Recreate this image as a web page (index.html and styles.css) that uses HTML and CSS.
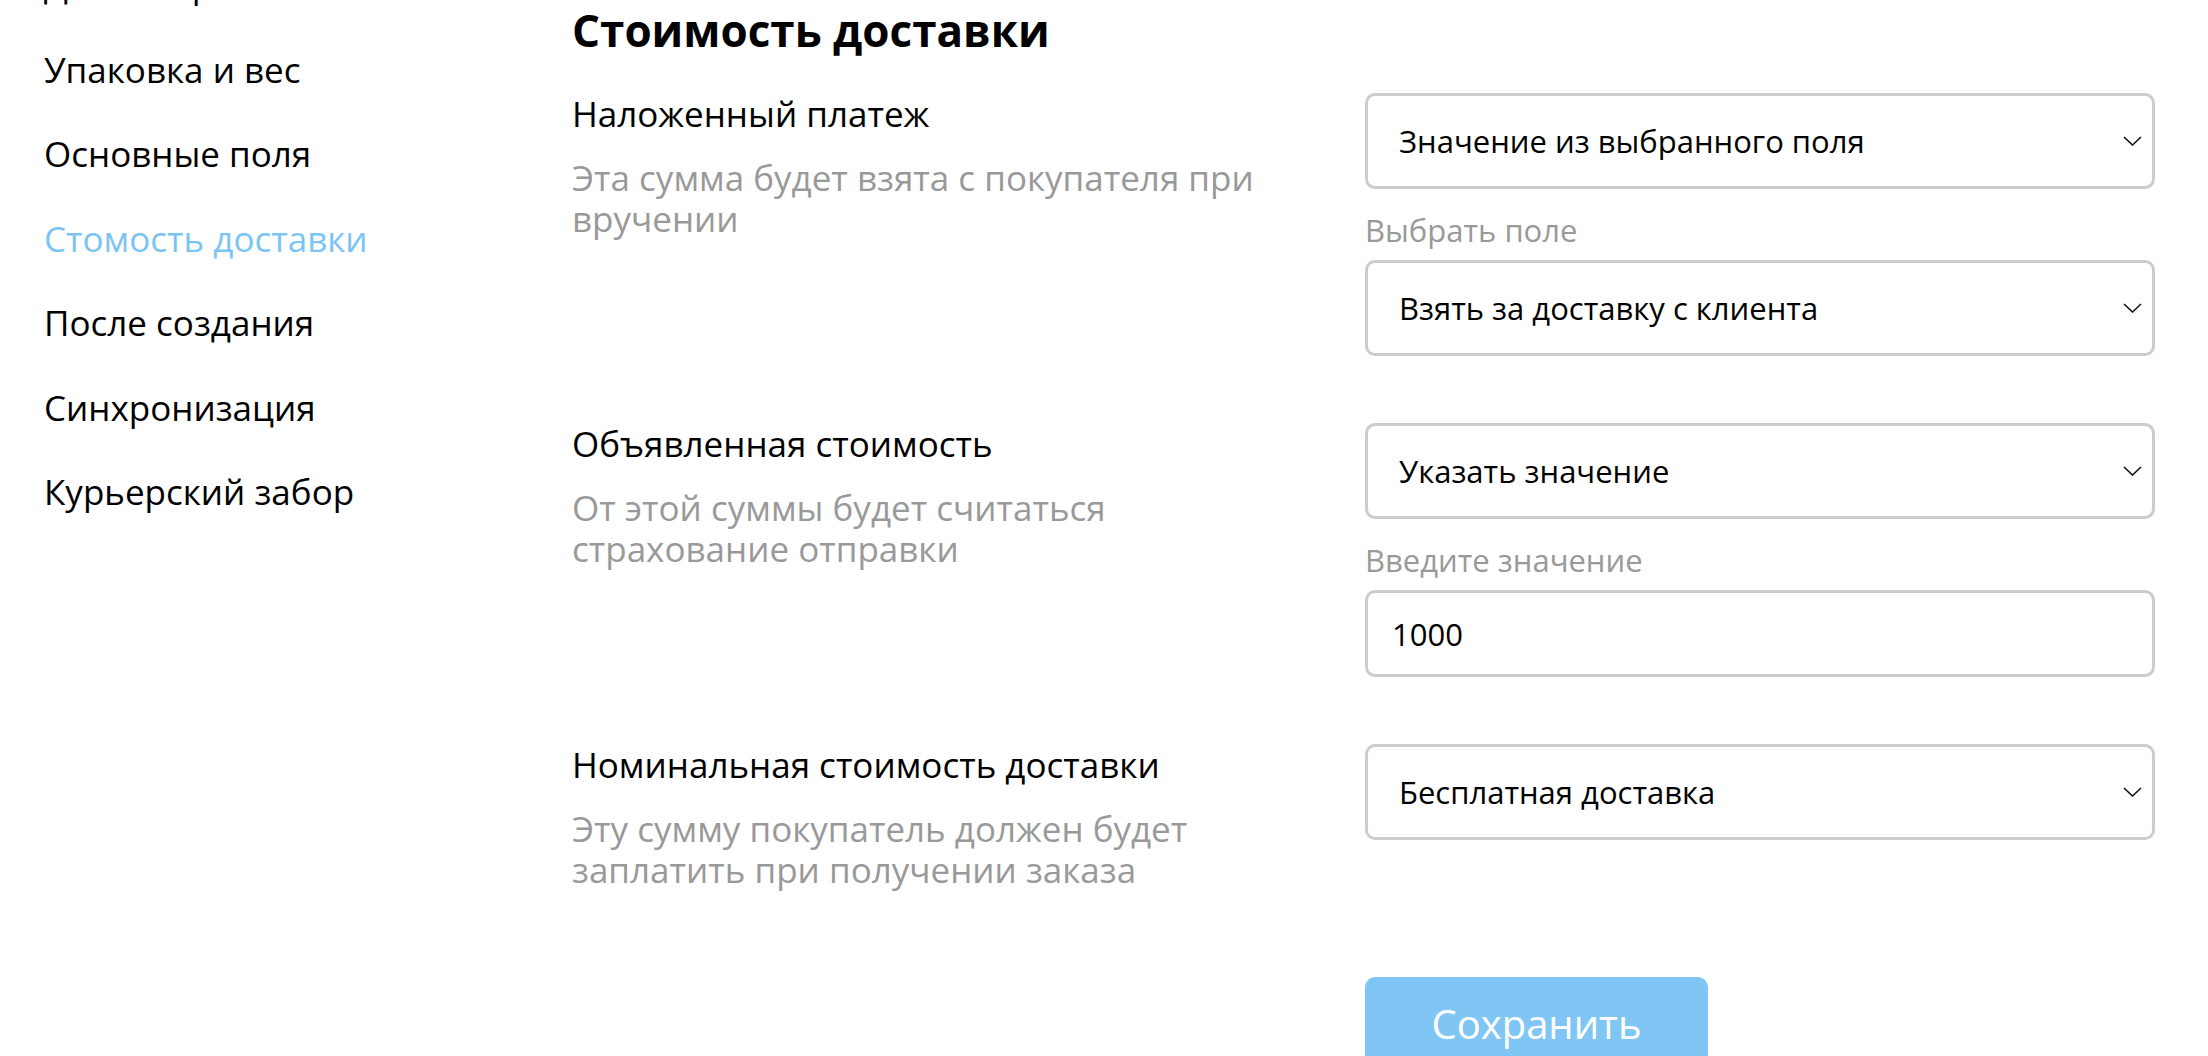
FILE: index.html
```html
<!DOCTYPE html>
<html lang="ru">
<head>
<meta charset="utf-8">
<title>Стоимость доставки</title>
<link rel="stylesheet" href="styles.css">
</head>
<body>
<div class="page">
  <aside class="sidebar">
    <ul class="nav">
      <li class="nav-item">Дата отправки</li>
      <li class="nav-item">Упаковка и вес</li>
      <li class="nav-item">Основные поля</li>
      <li class="nav-item active">Стомость доставки</li>
      <li class="nav-item">После создания</li>
      <li class="nav-item">Синхронизация</li>
      <li class="nav-item">Курьерский забор</li>
    </ul>
  </aside>
  <main class="content">
    <h1 class="title">Стоимость доставки</h1>

    <section class="row">
      <div class="info">
        <div class="row-label">Наложенный платеж</div>
        <p class="row-desc">Эта сумма будет взята с покупателя при вручении</p>
      </div>
      <div class="controls">
        <div class="select-wrap">
          <select class="select"><option>Значение из выбранного поля</option></select>
          <svg class="chevron" viewBox="0 0 19 10" aria-hidden="true"><path d="M1 1 L9.5 9 L18 1" fill="none" stroke="#111" stroke-width="1.6"/></svg>
        </div>
        <label class="field-label">Выбрать поле</label>
        <div class="select-wrap">
          <select class="select"><option>Взять за доставку с клиента</option></select>
          <svg class="chevron" viewBox="0 0 19 10" aria-hidden="true"><path d="M1 1 L9.5 9 L18 1" fill="none" stroke="#111" stroke-width="1.6"/></svg>
        </div>
      </div>
    </section>

    <section class="row">
      <div class="info">
        <div class="row-label">Объявленная стоимость</div>
        <p class="row-desc">От этой суммы будет считаться страхование отправки</p>
      </div>
      <div class="controls">
        <div class="select-wrap">
          <select class="select"><option>Указать значение</option></select>
          <svg class="chevron" viewBox="0 0 19 10" aria-hidden="true"><path d="M1 1 L9.5 9 L18 1" fill="none" stroke="#111" stroke-width="1.6"/></svg>
        </div>
        <label class="field-label">Введите значение</label>
        <input class="input" type="text" value="1000">
      </div>
    </section>

    <section class="row">
      <div class="info">
        <div class="row-label">Номинальная стоимость доставки</div>
        <p class="row-desc">Эту сумму покупатель должен будет заплатить при получении заказа</p>
      </div>
      <div class="controls">
        <div class="select-wrap">
          <select class="select"><option>Бесплатная доставка</option></select>
          <svg class="chevron" viewBox="0 0 19 10" aria-hidden="true"><path d="M1 1 L9.5 9 L18 1" fill="none" stroke="#111" stroke-width="1.6"/></svg>
        </div>
      </div>
    </section>

    <div class="actions">
      <button class="save" type="button">Сохранить</button>
    </div>
  </main>
</div>
</body>
</html>
```

FILE: styles.css
```css
html, body {
  margin: 0;
  padding: 0;
  background: #ffffff;
}

body {
  font-family: "Open Sans", "Noto Sans", sans-serif;
  font-size: 35px;
  line-height: 42px;
  color: #000000;
  height: 1056px;
  overflow: hidden;
}

.page {
  display: grid;
  grid-template-columns: 572px 1fr;
}

.sidebar {
  padding-left: 44px;
}

.nav {
  list-style: none;
  margin: -36px 0 0;
  padding: 0;
  display: flex;
  flex-direction: column;
  gap: 42.5px;
}

.nav-item {
  font-size: 35px;
  line-height: 42px;
  white-space: nowrap;
}

.nav-item.active {
  color: #7cc4f3;
}

.content {
  padding-right: 53px;
}

.title {
  margin: 0 0 33px;
  font-size: 44px;
  font-weight: 700;
  line-height: 60px;
}

.row {
  display: grid;
  grid-template-columns: 1fr 790px;
  column-gap: 93px;
  margin-bottom: 67px;
}

.info {
  padding-top: 1px;
}

.row-label {
  font-size: 35px;
  line-height: 40px;
}

.row-desc {
  margin: 23px 0 0;
  font-size: 35px;
  line-height: 41px;
  color: #999999;
}

.controls {
  display: flex;
  flex-direction: column;
}

.select-wrap {
  position: relative;
}

.select {
  display: block;
  appearance: none;
  -webkit-appearance: none;
  width: 100%;
  height: 96px;
  box-sizing: border-box;
  margin: 0;
  border: 3px solid #cccccc;
  border-radius: 10px;
  background: #ffffff;
  font-family: inherit;
  font-size: 31px;
  color: #000000;
  padding: 0 60px 0 31px;
  outline: none;
}

.chevron {
  position: absolute;
  right: 13px;
  top: 50%;
  width: 19px;
  height: 10px;
  margin-top: -5px;
  pointer-events: none;
}

.field-label {
  display: block;
  font-size: 31px;
  line-height: 42px;
  color: #999999;
  margin: 20px 0 9px;
}

.input {
  display: block;
  width: 100%;
  height: 87px;
  box-sizing: border-box;
  margin: 0;
  border: 3px solid #cccccc;
  border-radius: 10px;
  background: #ffffff;
  font-family: inherit;
  font-size: 31px;
  color: #000000;
  padding: 0 24px;
  outline: none;
}

.actions {
  display: grid;
  grid-template-columns: 1fr 790px;
  column-gap: 93px;
  margin-top: 87px;
}

.save {
  grid-column: 2;
  width: 343px;
  height: 92px;
  border: none;
  border-radius: 10px;
  background: #80c6f5;
  color: #ffffff;
  font-family: inherit;
  font-size: 40px;
  padding: 0;
  cursor: pointer;
}
```
